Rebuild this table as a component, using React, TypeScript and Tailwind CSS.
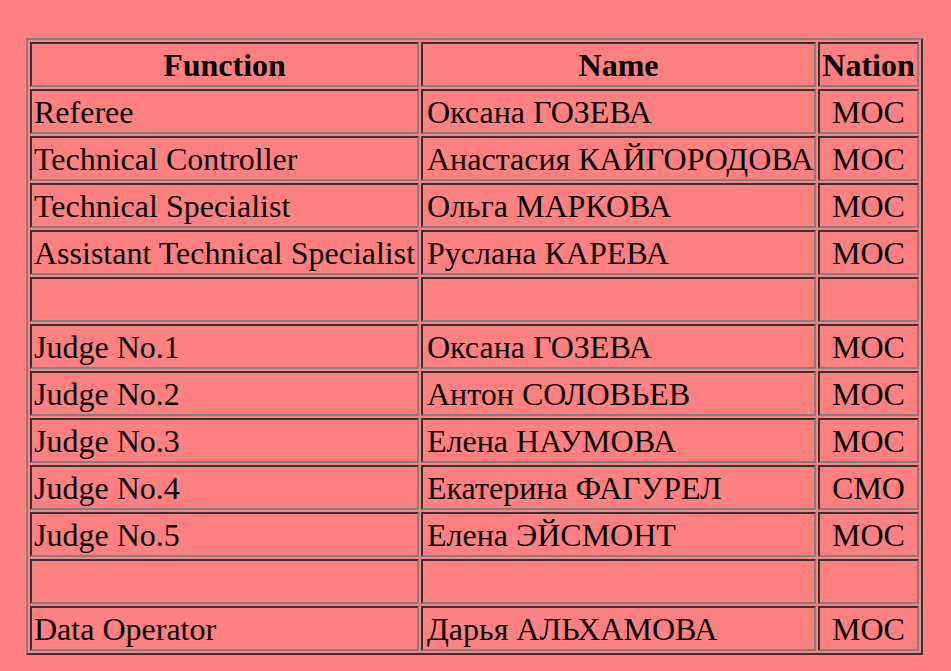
const rows: [string, string, string][] = [
  ["Referee", "Оксана ГОЗЕВА", "MOC"],
  ["Technical Controller", "Анастасия КАЙГОРОДОВА", "MOC"],
  ["Technical Specialist", "Ольга МАРКОВА", "MOC"],
  ["Assistant Technical Specialist", "Руслана КАРЕВА", "MOC"],
  ["", "", ""],
  ["Judge No.1", "Оксана ГОЗЕВА", "MOC"],
  ["Judge No.2", "Антон СОЛОВЬЕВ", "MOC"],
  ["Judge No.3", "Елена НАУМОВА", "MOC"],
  ["Judge No.4", "Екатерина ФАГУРЕЛ", "CMO"],
  ["Judge No.5", "Елена ЭЙСМОНТ", "MOC"],
  ["", "", ""],
  ["Data Operator", "Дарья АЛЬХАМОВА", "MOC"],
];

const cell =
  "h-[45px] border-2 border-t-[#333333] border-l-[#333333] border-b-[#808080] border-r-[#808080] px-[2px] py-0 whitespace-nowrap overflow-visible";

export default function App() {
  return (
    <div className="min-h-[671px] w-full bg-[#ff8080] pl-[26px] pt-[38px] font-['Liberation_Serif',serif] text-[32px] leading-[36px] text-black">
      <table className="table-fixed w-[897px] border-separate border-spacing-[2px] border-2 border-t-[#808080] border-l-[#808080] border-b-[#333333] border-r-[#333333]">
        <thead>
          <tr>
            <th className={`${cell} w-[389px] text-center font-bold`}>Function</th>
            <th className={`${cell} w-[395px] text-center font-bold`}>Name</th>
            <th className={`${cell} w-[101px] text-center font-bold px-0`}>Nation</th>
          </tr>
        </thead>
        <tbody>
          {rows.map((r, i) => (
            <tr key={i}>
              <td className={`${cell} text-left`}>{r[0]}</td>
              <td className={`${cell} text-left pl-[4px]`}>{r[1]}</td>
              <td className={`${cell} text-center px-0`}>{r[2]}</td>
            </tr>
          ))}
        </tbody>
      </table>
    </div>
  );
}
